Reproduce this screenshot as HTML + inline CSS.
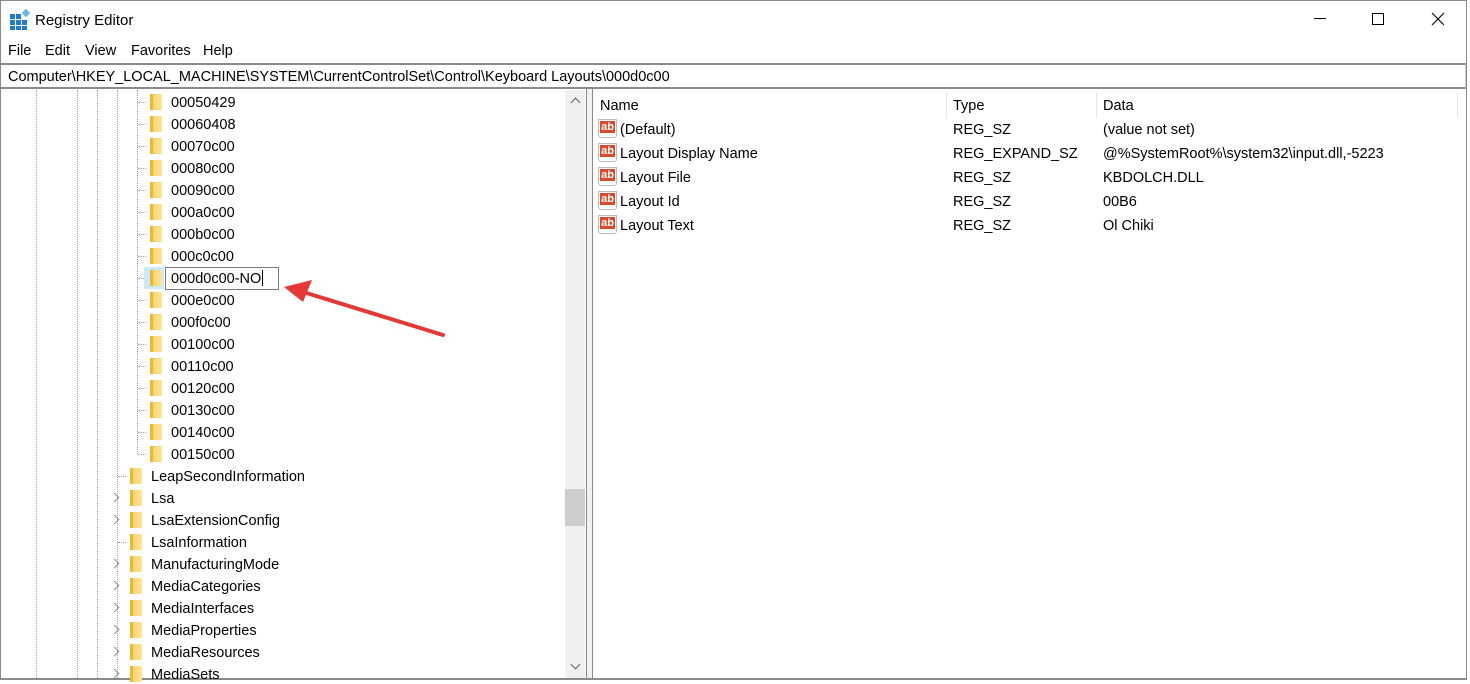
<!DOCTYPE html>
<html><head><meta charset="utf-8"><style>
*{margin:0;padding:0;box-sizing:border-box}
body{width:1470px;height:680px;background:#fff;font-family:"Liberation Sans",sans-serif;font-size:14.5px;color:#000;position:relative;overflow:hidden}
.abs{position:absolute}
.t{position:absolute;white-space:nowrap;line-height:18px;margin-top:1px}
.vd{position:absolute;width:1px;border-left:1px dotted #a0a0a0}
.hd{position:absolute;height:1px;border-top:1px dotted #a0a0a0}
.fold{position:absolute;width:12px;height:16px;background:linear-gradient(90deg,#e8b838 0,#e8b838 3px,#fcd56a 3px,#fde59a 100%)}
.chev{position:absolute;width:7px;height:7px;border-right:1.5px solid #909090;border-top:1.5px solid #909090;transform:rotate(45deg)}
</style></head><body>
<div class="abs" style="left:0;top:0;width:1467px;height:680px;border:1px solid #8a8a8a;border-bottom:none"></div>
<svg class="abs" style="left:9px;top:9px" width="22" height="22" viewBox="0 0 22 22">
<g fill="#1f7bd0"><rect x="1" y="5" width="5" height="5"/><rect x="7" y="5" width="5" height="5"/><rect x="1" y="11" width="5" height="5"/><rect x="7" y="11" width="5" height="5"/><rect x="13" y="11" width="5" height="5"/><rect x="1" y="17" width="5" height="4"/><rect x="7" y="17" width="5" height="4"/><rect x="13" y="17" width="5" height="4"/></g>
<rect x="14" y="1" width="6" height="6" fill="#6fb3ec" transform="rotate(45 17 4)"/></svg>
<div class="t" style="left:35px;top:11px;font-size:15px">Registry Editor</div>
<div class="abs" style="left:1314px;top:18px;width:12px;height:1px;background:#000"></div>
<div class="abs" style="left:1372px;top:13px;width:12px;height:12px;border:1px solid #000"></div>
<svg class="abs" style="left:1431px;top:12px" width="14" height="14"><path d="M1 1L13 13M13 1L1 13" stroke="#000" stroke-width="1.1"/></svg>
<div class="t" style="left:8px;top:41px">File</div>
<div class="t" style="left:45px;top:41px">Edit</div>
<div class="t" style="left:85px;top:41px">View</div>
<div class="t" style="left:131px;top:41px">Favorites</div>
<div class="t" style="left:203px;top:41px">Help</div>
<div class="abs" style="left:1px;top:63px;width:1465px;height:26px;border-top:2px solid #8a8a8a;border-bottom:2px solid #8a8a8a;border-right:1px solid #ccc"></div>
<div class="t" style="left:8px;top:67px">Computer\HKEY_LOCAL_MACHINE\SYSTEM\CurrentControlSet\Control\Keyboard Layouts\000d0c00</div>
<div class="abs" style="left:586px;top:89px;width:1px;height:591px;background:#8a8a8a"></div>
<div class="abs" style="left:587px;top:89px;width:5px;height:591px;background:#f0f0f0"></div>
<div class="abs" style="left:592px;top:89px;width:1px;height:591px;background:#8a8a8a"></div>
<div class="abs" style="left:1px;top:678px;width:1466px;height:2px;background:#8a8a8a"></div>
<div class="abs" style="left:565px;top:90px;width:20px;height:588px;background:#f0f0f0"></div>
<div class="abs" style="left:565px;top:489px;width:20px;height:37px;background:#cdcdcd"></div>
<div class="chev" style="left:572px;top:99px;transform:rotate(-45deg);border-color:#606060"></div>
<div class="chev" style="left:572px;top:661px;transform:rotate(135deg);border-color:#606060"></div>
<div class="vd" style="left:36px;top:90px;height:588px"></div>
<div class="vd" style="left:77px;top:90px;height:588px"></div>
<div class="vd" style="left:97px;top:90px;height:588px"></div>
<div class="vd" style="left:117px;top:90px;height:588px"></div>
<div class="vd" style="left:137px;top:90px;height:364px"></div>
<div id="tree"></div>
<div class="abs" style="left:144px;top:267px;width:20px;height:22px;background:#cce8ff"></div>
<div class="fold" style="left:150px;top:270px"></div>
<div class="abs" style="left:165px;top:267px;width:114px;height:23px;border:1px solid #7a7a7a;background:#fff"></div>
<div class="t" style="left:171px;top:269px">000d0c00-NO<span style="display:inline-block;width:1px;height:16px;background:#000;vertical-align:-3px;margin-left:1px"></span></div>
<svg class="abs" style="left:0;top:0" width="1470" height="680"><path d="M443 335L300 291" stroke="#e53935" stroke-width="4" stroke-linecap="round"/><path d="M284 287L312 280L303 302Z" fill="#e53935"/></svg>
<div class="abs" style="left:946px;top:92px;width:1px;height:26px;background:#e5e5e5"></div>
<div class="abs" style="left:1096px;top:92px;width:1px;height:26px;background:#e5e5e5"></div>
<div class="abs" style="left:1457px;top:92px;width:1px;height:26px;background:#e5e5e5"></div>
<div class="t" style="left:600px;top:96px">Name</div>
<div class="t" style="left:953px;top:96px">Type</div>
<div class="t" style="left:1103px;top:96px">Data</div>
<div id="vals"></div>
<script>
var h='';
var kids=["00050429","00060408","00070c00","00080c00","00090c00","000a0c00","000b0c00","000c0c00",null,"000e0c00","000f0c00","00100c00","00110c00","00120c00","00130c00","00140c00","00150c00"];
kids.forEach(function(k,i){var y=102+i*22;
h+='<div class="hd" style="left:138px;top:'+y+'px;width:8px"></div>';
if(k){h+='<div class="fold" style="left:150px;top:'+(y-8)+'px"></div>';
h+='<div class="t" style="left:171px;top:'+(y-9)+'px">'+k+'</div>';}});
var up=[["LeapSecondInformation",0],["Lsa",1],["LsaExtensionConfig",1],["LsaInformation",0],["ManufacturingMode",1],["MediaCategories",1],["MediaInterfaces",1],["MediaProperties",1],["MediaResources",1],["MediaSets",1]];
up.forEach(function(u,i){var y=476+i*22;
if(u[1])h+='<div class="chev" style="left:111px;top:'+(y-4)+'px"></div>';else h+='<div class="hd" style="left:118px;top:'+y+'px;width:8px"></div>';
h+='<div class="fold" style="left:130px;top:'+(y-8)+'px"></div>';
h+='<div class="t" style="left:151px;top:'+(y-9)+'px">'+u[0]+'</div>';});
document.getElementById('tree').innerHTML=h;
var v=[["(Default)","REG_SZ","(value not set)"],["Layout Display Name","REG_EXPAND_SZ","@%SystemRoot%\\system32\\input.dll,-5223"],["Layout File","REG_SZ","KBDOLCH.DLL"],["Layout Id","REG_SZ","00B6"],["Layout Text","REG_SZ","Ol Chiki"]];
var g='';
v.forEach(function(r,i){var y=129+i*24;
g+='<div class="abs" style="left:598px;top:'+(y-10)+'px;width:19px;height:19px;border:1px solid #bbb;border-radius:0 0 3px 3px;background:#fff"><div style="position:absolute;left:1px;top:1px;width:15px;height:12px;background:#d84a2a;color:#fff;font:bold 11px/12px \'Liberation Sans\',sans-serif;text-align:center">ab</div></div>';
g+='<div class="t" style="left:620px;top:'+(y-9)+'px">'+r[0]+'</div>';
g+='<div class="t" style="left:953px;top:'+(y-9)+'px">'+r[1]+'</div>';
g+='<div class="t" style="left:1103px;top:'+(y-9)+'px">'+r[2]+'</div>';});
document.getElementById('vals').innerHTML=g;
</script>
</body></html>
